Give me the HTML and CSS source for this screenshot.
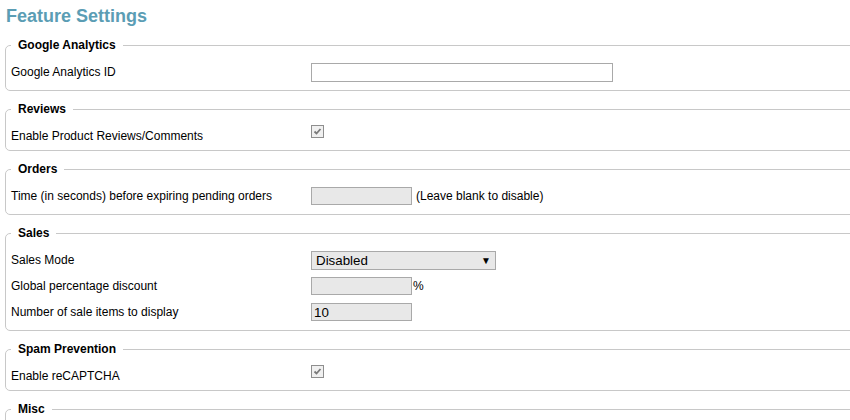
FILE: index.html
```html
<!DOCTYPE html>
<html>
<head>
<meta charset="utf-8">
<title>Feature Settings</title>
<link rel="stylesheet" href="styles.css">
</head>
<body>
<div class="page">
  <h1 class="title">Feature Settings</h1>

  <fieldset class="group">
    <legend class="group-title">Google Analytics</legend>
    <div class="row">
      <label class="label">Google Analytics ID</label>
      <div class="control"><input class="text text-wide" type="text"></div>
    </div>
  </fieldset>

  <fieldset class="group">
    <legend class="group-title">Reviews</legend>
    <div class="row row-check">
      <label class="label">Enable Product Reviews/Comments</label>
      <div class="control"><span class="check"><svg class="check-mark" viewBox="0 0 11 11" width="11" height="11"><path d="M2.5 5.5 L4.5 7.5 L8.5 3" fill="none" stroke="#7a7a7a" stroke-width="1.8"/></svg></span></div>
    </div>
  </fieldset>

  <fieldset class="group">
    <legend class="group-title">Orders</legend>
    <div class="row">
      <label class="label">Time (in seconds) before expiring pending orders</label>
      <div class="control"><input class="text text-short" type="text"><span class="hint">(Leave blank to disable)</span></div>
    </div>
  </fieldset>

  <fieldset class="group">
    <legend class="group-title">Sales</legend>
    <div class="row">
      <label class="label">Sales Mode</label>
      <div class="control">
        <div class="select-wrap"><select class="select"><option>Disabled</option></select></div>
      </div>
    </div>
    <div class="row">
      <label class="label">Global percentage discount</label>
      <div class="control"><input class="text text-short" type="text"><span class="unit">%</span></div>
    </div>
    <div class="row">
      <label class="label">Number of sale items to display</label>
      <div class="control"><input class="text text-short" type="text" value="10"></div>
    </div>
  </fieldset>

  <fieldset class="group">
    <legend class="group-title">Spam Prevention</legend>
    <div class="row row-check">
      <label class="label">Enable reCAPTCHA</label>
      <div class="control"><span class="check"><svg class="check-mark" viewBox="0 0 11 11" width="11" height="11"><path d="M2.5 5.5 L4.5 7.5 L8.5 3" fill="none" stroke="#7a7a7a" stroke-width="1.8"/></svg></span></div>
    </div>
  </fieldset>

  <fieldset class="group">
    <legend class="group-title">Misc</legend>
    <div class="row">
      <label class="label">Default currency</label>
      <div class="control"><input class="text text-short" type="text"></div>
    </div>
  </fieldset>
</div>
</body>
</html>
```

FILE: styles.css
```css
html, body {
  margin: 0;
  padding: 0;
  background: #fff;
  overflow: hidden;
}

body {
  font-family: "Liberation Sans", Arial, sans-serif;
  font-size: 12px;
  color: #000;
}

.page {
  width: 900px;
  padding: 5px 0 0 5px;
}

.title {
  margin: 0 0 10px 1px;
  font-size: 18px;
  line-height: 22px;
  font-weight: bold;
  color: #5b9db4;
}

.group {
  margin: 0 0 10px;
  padding: 6px 5px 5px;
  border: 1px solid #c8c8c8;
  border-radius: 5px;
  min-width: 0;
}

.group-title {
  padding: 0 7px;
  font-weight: bold;
  line-height: 16px;
}

.row {
  display: flex;
  align-items: center;
  height: 26px;
}

.row-check {
  height: 22px;
  align-items: flex-start;
}

.label {
  width: 300px;
  flex: none;
  line-height: 14px;
}

.row-check .label {
  margin-top: 6px;
}

.control {
  display: flex;
  align-items: center;
}

.check {
  display: block;
  margin-top: 2px;
  width: 11px;
  height: 11px;
  border: 1px solid #8e8e8e;
  background: #f0f0f0;
}

.check-mark {
  display: block;
}

.text {
  box-sizing: border-box;
  margin: 0;
  height: 18px;
  padding: 0 2px;
  border: 1px solid #a9a9a9;
  border-radius: 0;
  background: #e8e8e8;
  font-family: "Liberation Sans", Arial, sans-serif;
  font-size: 13.33px;
  color: #000;
  outline: none;
}

.text-wide {
  width: 302px;
  height: 19px;
  background: #fff;
}

.text-short {
  width: 101px;
}

.hint {
  margin-left: 4px;
}

.unit {
  margin-left: 1px;
}

.select-wrap {
  position: relative;
  width: 185px;
  height: 19px;
}

.select-wrap::after {
  content: "\25BC";
  position: absolute;
  right: 5px;
  top: 4px;
  font-size: 10px;
  line-height: 11px;
  color: #000;
  pointer-events: none;
}

.select {
  appearance: none;
  -webkit-appearance: none;
  box-sizing: border-box;
  display: block;
  margin: 0;
  width: 185px;
  height: 19px;
  padding: 0 4px;
  border: 1px solid #a9a9a9;
  border-radius: 0;
  background: #e8e8e8;
  font-family: "Liberation Sans", Arial, sans-serif;
  font-size: 13.33px;
  line-height: 17px;
  color: #000;
}
```
